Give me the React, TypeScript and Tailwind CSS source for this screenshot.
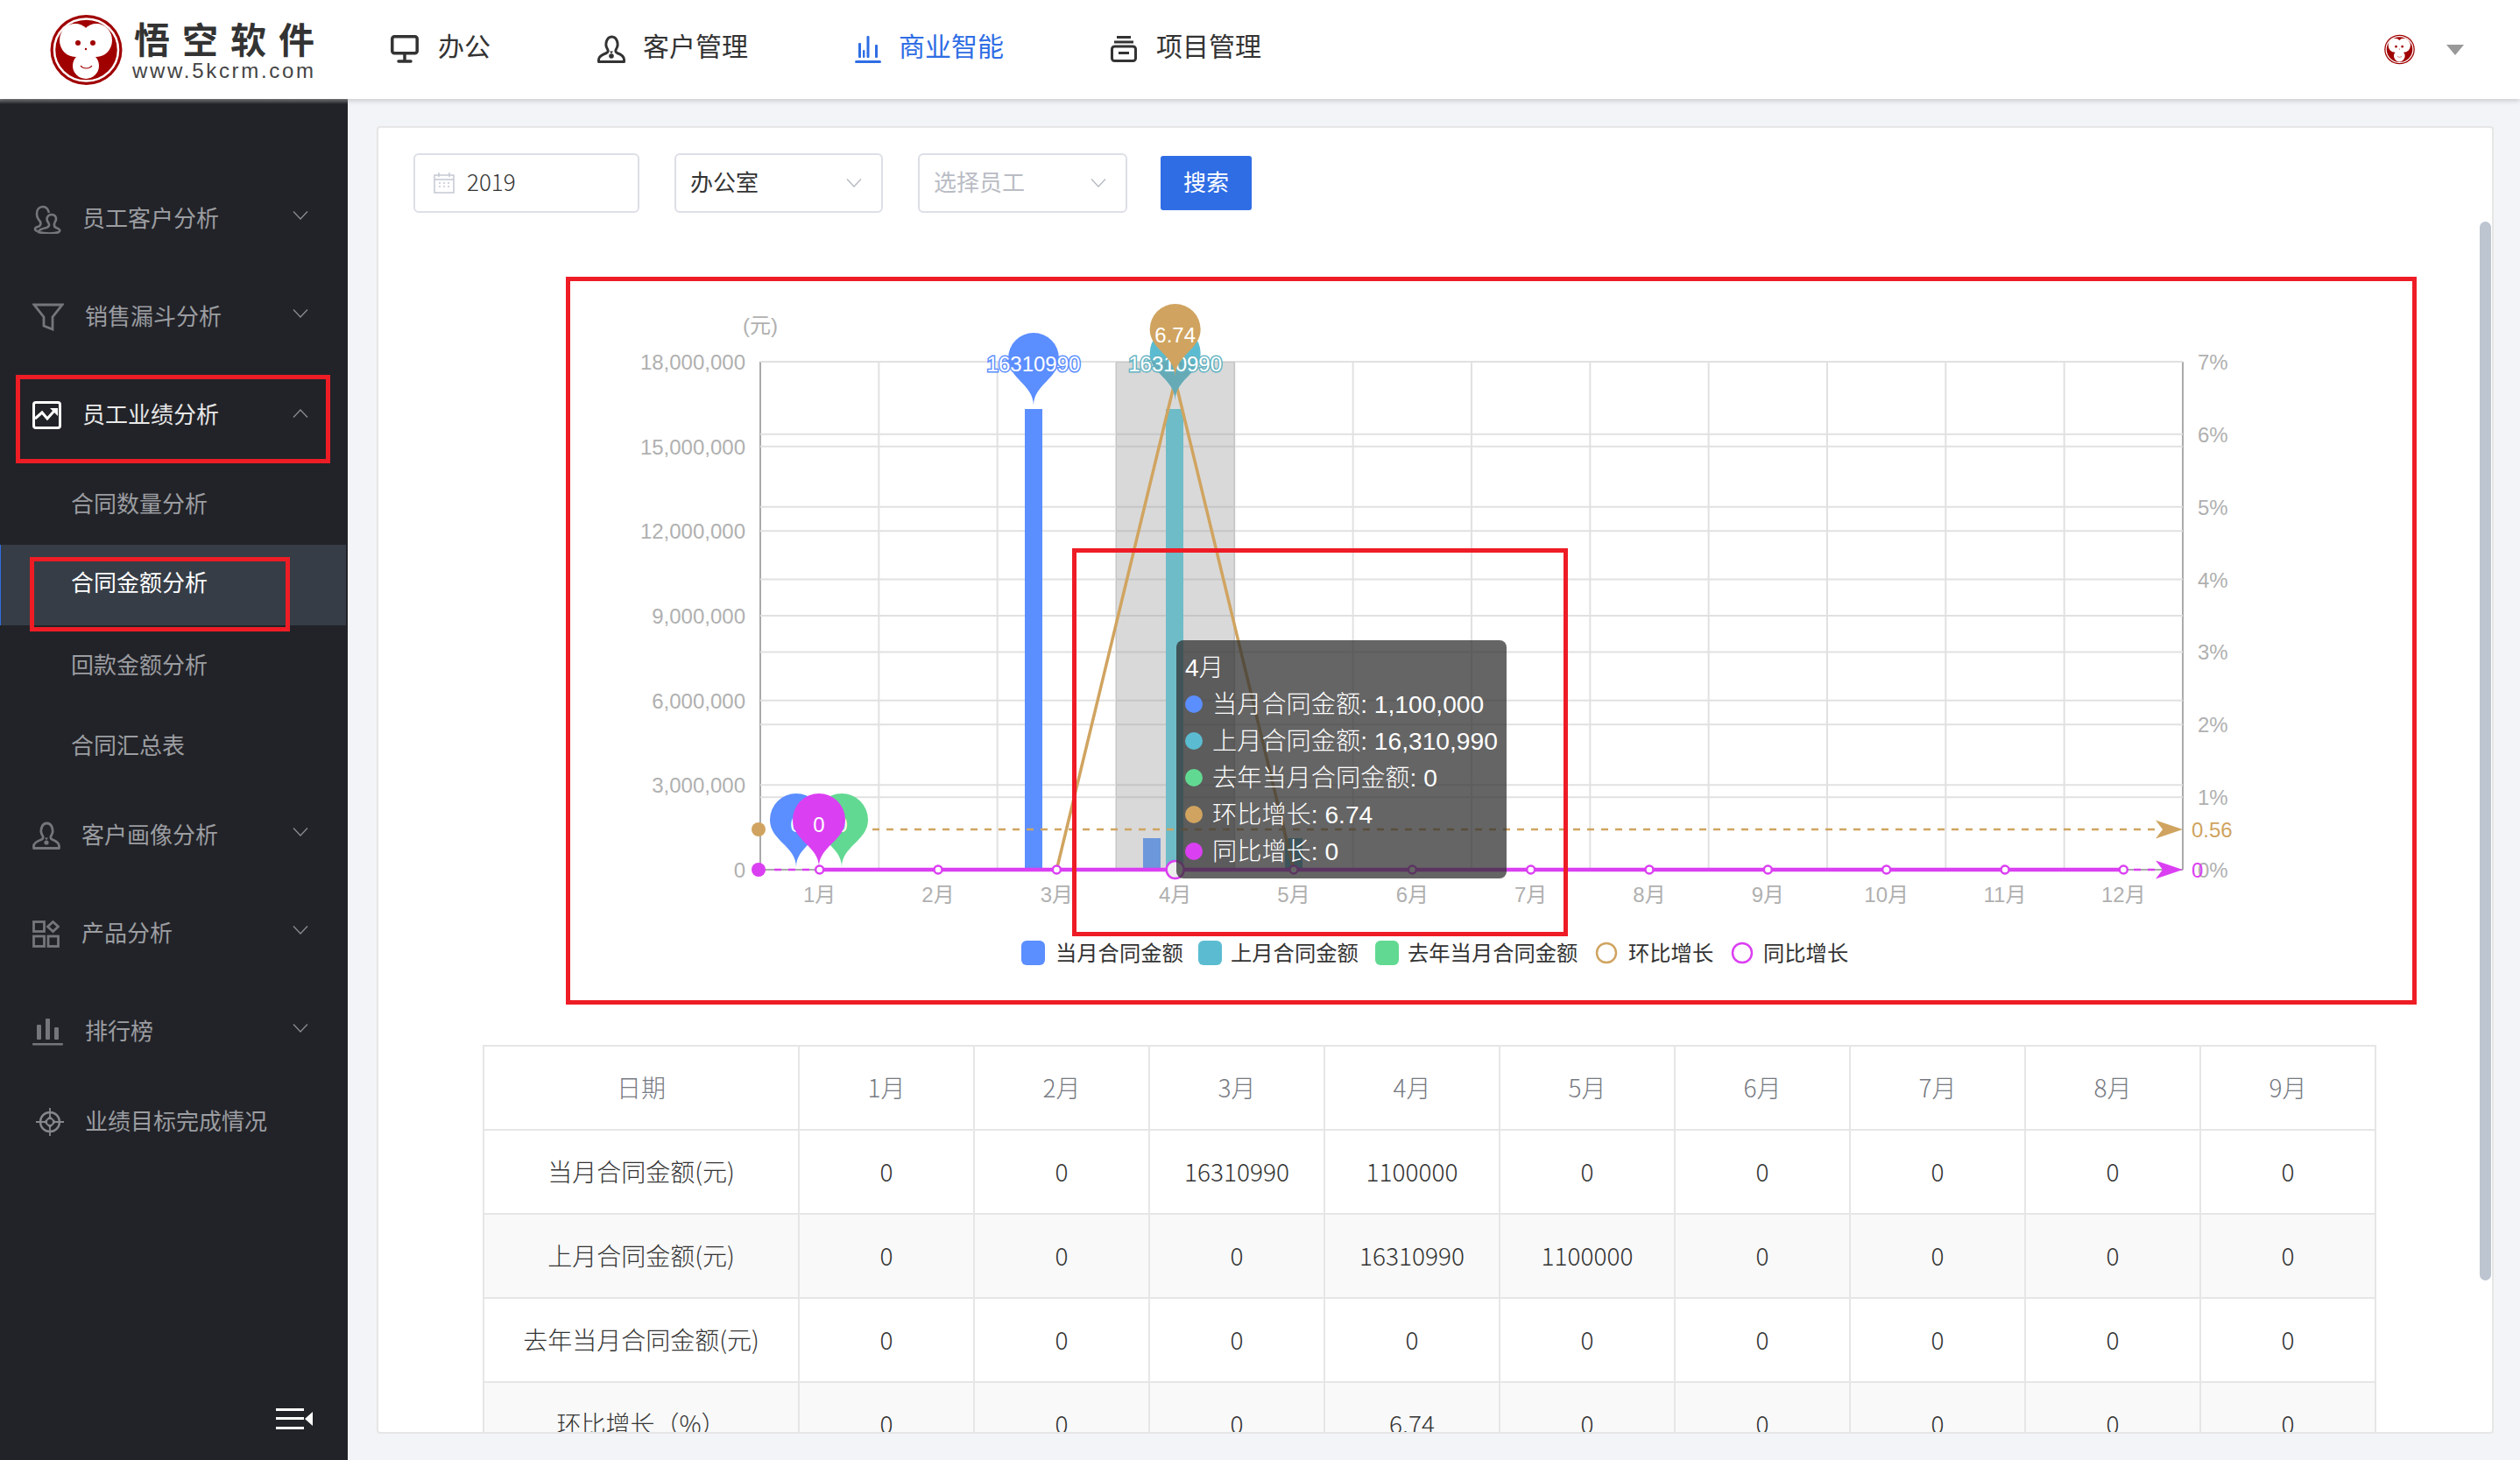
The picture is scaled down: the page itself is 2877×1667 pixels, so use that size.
import React from "react";

const RED = "border-[5px] border-[#ee1c25]";
const BLUE = "#5b8eff", TEAL = "#5bbcd1", GREEN = "#62d992", GOLD = "#d0a460", MAG = "#db3ff2";
const AXIS = "#aaaaaa", GRID = "#e1e1e1", LBL = "#b0b0b0";

const L = 868, R = 2492, T = 413, B = 993;
const CW = (R - L) / 12;
const cx = (i: number) => L + CW * (i + 0.5);
const money = ["0", "3,000,000", "6,000,000", "9,000,000", "12,000,000", "15,000,000", "18,000,000"];
const pct = ["0%", "1%", "2%", "3%", "4%", "5%", "6%", "7%"];

function pinPath(x: number, tip: number, r: number, h: number) {
  const cy = tip - h + r;
  return `M${x} ${tip}C${x} ${tip - 24} ${x - r} ${cy + r * 0.8} ${x - r} ${cy}A${r} ${r} 0 1 1 ${x + r} ${cy}C${x + r} ${cy + r * 0.8} ${x} ${tip - 24} ${x} ${tip}Z`;
}

function Arrow({ y, color }: { y: number; color: string }) {
  return <path d={`M${R} ${y}L${R - 31} ${y - 10.5}L${R - 23} ${y}L${R - 31} ${y + 10.5}Z`} fill={color} />;
}

function Chart() {
  const txt = { fontFamily: '"Liberation Sans","Noto Sans CJK SC",sans-serif', fontSize: 24 } as const;
  const leg = { ...txt, fontSize: 24.3 } as const;
  return (
    <svg viewBox="651 321 2103 821" className="block w-full h-full">
      <defs>
        <clipPath id="band">
          <rect x={1274} y={T} width={136} height={B - T} />
        </clipPath>
      </defs>
      {Array.from({ length: 13 }, (_, i) => (
        <line key={i} x1={L + CW * i} x2={L + CW * i} y1={T} y2={B} stroke={i === 0 || i === 12 ? AXIS : GRID} strokeWidth={2} />
      ))}
      {money.map((m, i) => {
        const y = B - (i * (B - T)) / 6;
        return (
          <g key={m}>
            {i > 0 && <line x1={L} x2={R} y1={y} y2={y} stroke={GRID} strokeWidth={2} />}
            <text x={851} y={y + 9} textAnchor="end" fill={LBL} style={txt}>{m}</text>
          </g>
        );
      })}
      {pct.map((m, i) => {
        const y = B - (i * (B - T)) / 7;
        return (
          <g key={m}>
            {i > 0 && <line x1={L} x2={R} y1={y} y2={y} stroke={GRID} strokeWidth={2} />}
            <text x={2509} y={y + 9} fill={LBL} style={txt}>{m}</text>
          </g>
        );
      })}
      <text x={868} y={380} textAnchor="middle" fill={LBL} style={txt}>(元)</text>
      {Array.from({ length: 12 }, (_, i) => (
        <text key={i} x={cx(i)} y={1030} textAnchor="middle" fill={LBL} style={txt}>{i + 1}月</text>
      ))}
      <line x1={L} x2={R} y1={B} y2={B} stroke={AXIS} strokeWidth={2} />

      {/* hover band, then bars */}
      <rect x={1274} y={T} width={136} height={B - T} fill="rgba(150,150,150,0.36)" />
      <rect x={1170} y={467} width={20} height={526} fill={BLUE} />
      <rect x={1331} y={467} width={20} height={526} fill="#6dbcc8" />
      <rect x={1305} y={957} width={20} height={36} fill="#6c97db" />
      <rect x={1467} y={957} width={20} height={36} fill={TEAL} />

      {/* mark lines */}
      <line x1={884} x2={R - 24} y1={947} y2={947} stroke={GOLD} strokeWidth={2.5} strokeDasharray="8 8" />
      <line x1={884} x2={R - 24} y1={B} y2={B} stroke={MAG} strokeWidth={2.5} strokeDasharray="8 8" />
      <Arrow y={947} color={GOLD} />
      <Arrow y={B} color={MAG} />
      <ellipse cx={866} cy={947} rx={8} ry={8} fill={GOLD} />
      <ellipse cx={866} cy={B} rx={8} ry={8} fill={MAG} />
      <text x={2502} y={956} fill={GOLD} style={txt}>0.56</text>
      <text x={2502} y={1002} fill={MAG} style={txt}>0</text>

      {/* lines */}
      <polyline points={`${cx(2)},${B} ${cx(3)},434 ${cx(4)},${B}`} fill="none" stroke={GOLD} strokeWidth={3.5} />
      <line x1={cx(0)} x2={cx(11)} y1={B} y2={B} stroke={MAG} strokeWidth={4.5} />
      {Array.from({ length: 12 }, (_, i) =>
        i === 3 ? (
          <circle key={i} cx={cx(i)} cy={B} r={10} fill="#eeeeee" stroke={MAG} strokeWidth={2.5} />
        ) : (
          <circle key={i} cx={cx(i)} cy={B} r={4.5} fill="#ffffff" stroke={MAG} strokeWidth={2.5} />
        )
      )}

      {/* pins */}
      <path d={pinPath(909, 990, 30, 84)} fill={BLUE} />
      <text x={909} y={950} textAnchor="middle" fill="#fff" style={txt}>0</text>
      <path d={pinPath(961, 990, 30, 84)} fill={GREEN} />
      <text x={961} y={950} textAnchor="middle" fill="#fff" style={txt}>0</text>
      <path d={pinPath(935, 990, 30, 84)} fill={MAG} />
      <text x={935} y={950} textAnchor="middle" fill="#fff" style={txt}>0</text>

      <path d={pinPath(1180, 463, 29, 83)} fill={BLUE} />
      <text x={1180} y={424} textAnchor="middle" fill="#fff" stroke={BLUE} strokeWidth={3} style={txt} paintOrder="stroke">16310990</text>
      <path d={pinPath(cx(3), 457, 29, 83)} fill={TEAL} />
      <path d={pinPath(cx(3), 457, 29, 83)} fill="#66aab5" clipPath="url(#band)" />
      <text x={cx(3)} y={424} textAnchor="middle" fill="#fff" stroke="#63b3c2" strokeWidth={3} style={txt} paintOrder="stroke">16310990</text>
      <path d={pinPath(cx(3), 430, 29, 83)} fill={GOLD} />
      <text x={cx(3)} y={391} textAnchor="middle" fill="#fff" style={txt}>6.74</text>

      {/* legend */}
      {[
        [1166, BLUE, 1205, "当月合同金额"],
        [1368, TEAL, 1405, "上月合同金额"],
        [1570, GREEN, 1607, "去年当月合同金额"],
      ].map(([x, c, tx, t]) => (
        <g key={t as string}>
          <rect x={x as number} y={1074} width={27} height={28} rx={6} fill={c as string} />
          <text x={tx as number} y={1097} fill="#333" style={leg}>{t as string}</text>
        </g>
      ))}
      <circle cx={1834} cy={1088} r={11} fill="#fff" stroke={GOLD} strokeWidth={2.5} />
      <text x={1859} y={1097} fill="#333" style={leg}>环比增长</text>
      <circle cx={1989} cy={1088} r={11} fill="#fff" stroke={MAG} strokeWidth={2.5} />
      <text x={2013} y={1097} fill="#333" style={leg}>同比增长</text>
    </svg>
  );
}

function Tooltip() {
  const rows = [
    [BLUE, "当月合同金额: 1,100,000"],
    [TEAL, "上月合同金额: 16,310,990"],
    [GREEN, "去年当月合同金额: 0"],
    [GOLD, "环比增长: 6.74"],
    [MAG, "同比增长: 0"],
  ];
  return (
    <div className="absolute left-[692px] top-[410px] w-[377px] h-[272px] rounded-lg bg-[rgba(50,50,50,0.75)] py-[10px] pl-[10px] text-[28.2px] font-light leading-[42px] text-white whitespace-nowrap">
      <div>4月</div>
      {rows.map(([c, t]) => (
        <div key={t} className="flex items-center gap-[11px]">
          <span className="w-[20px] h-[20px] rounded-full" style={{ background: c }} />
          <span>{t}</span>
        </div>
      ))}
    </div>
  );
}

function Chev({ up, className = "" }: { up?: boolean; className?: string }) {
  return (
    <svg width="18" height="10" viewBox="0 0 18 10" className={className} fill="none" stroke="currentColor" strokeWidth="1.3">
      <path d={up ? "M1 9.5L9 1L17 9.5" : "M1 .5L9 9L17 .5"} />
    </svg>
  );
}

const Icons: Record<string, React.ReactNode> = {
  users: (
    <svg width="33" height="33" viewBox="0 0 33 33" fill="none" stroke="#74767b" strokeWidth="2.6">
      <path d="M6 30c-4-1-4-4 0-5 3-1 4-3 3-6-3-3-4-6-4-9 0-5 3-8 7-8s6 3 7 7" />
      <path d="M7 31c7 2 18 2 23 0 3-2 0-4-3-5-2-1-3-3-1-7 2-3 1-8-4-8s-7 5-4 9c2 3 1 5-2 6-5 1-9 3-9 5z" />
    </svg>
  ),
  funnel: (
    <svg width="36" height="32" viewBox="0 0 36 32" fill="none" stroke="#74767b" strokeWidth="2.8">
      <path d="M2 2H34L23 16V30L13 26V16Z" strokeLinejoin="miter" />
    </svg>
  ),
  trend: (
    <svg width="33" height="32" viewBox="0 0 33 32" fill="none">
      <rect x="1.5" y="1.5" width="30" height="29" rx="2.5" stroke="#fff" strokeWidth="3" />
      <path d="M3 20L11 13L17 20L25 11" stroke="#fff" strokeWidth="3" />
      <path d="M20 8H29V17Z" fill="#fff" />
    </svg>
  ),
  person: (
    <svg width="32" height="32" viewBox="0 0 32 32" fill="none" stroke="#74767b" strokeWidth="2.8">
      <path d="M1.5 30.5h29V28c0-4-4-6-8-7.5-2-1-2-3-1-4.500 2-3 2-6 1-9-1-3-3-5-6-5s-5 2-6 5c-1 3-1 6 1 9 1 1.500 1 3.500-1 4.500-4 1.500-9 3.500-9 7.500z" strokeLinejoin="round" />
      <circle cx="16" cy="24" r="2.6" fill="#74767b" stroke="none" />
      <path d="M14 18.5l2 3 2-3" fill="#74767b" stroke="none" />
    </svg>
  ),
  grid: (
    <svg width="31" height="31" viewBox="0 0 31 31" fill="none" stroke="#74767b" strokeWidth="2.8">
      <rect x="1.5" y="1.5" width="12" height="11" />
      <rect x="1.5" y="18" width="12" height="11.5" />
      <rect x="18" y="18" width="11.5" height="11.5" />
      <path d="M23.5 1.5L29.5 7L23.5 12.5L17.5 7Z" />
    </svg>
  ),
  rank: (
    <svg width="35" height="32" viewBox="0 0 35 32" fill="#74767b">
      <rect x="5" y="8" width="5" height="17" rx="1" />
      <rect x="15" y="1" width="5" height="24" rx="1" />
      <rect x="25" y="11" width="5" height="14" rx="1" />
      <rect x="0" y="29" width="35" height="2.6" rx="1" />
    </svg>
  ),
  target: (
    <svg width="32" height="32" viewBox="0 0 32 32" fill="none" stroke="#85878b" strokeWidth="2.4">
      <path d="M0 16H32M16 0V32" strokeWidth="1.8" />
      <ellipse cx="16" cy="16" rx="11" ry="11" />
      <path d="M16 9L23 16L16 23L9 16Z" fill="#85878b" stroke="none" />
      <circle cx="16" cy="16" r="3" fill="#222328" stroke="none" />
    </svg>
  ),
};

function SideRow({ icon, label, gap, active, up }: { icon: string; label: string; gap: string; active?: boolean; up?: boolean }) {
  return (
    <div className="flex items-center h-[112px] pl-[37px] pr-[45px]">
      <span className={`flex ${gap} items-center`}>{Icons[icon]}</span>
      <span className={`flex-1 text-[26px] ${active ? "text-[#e8e8e8]" : "text-[#9b9da1]"}`}>{label}</span>
      <Chev up={up} className={`text-[#8a8c90] ${up ? "-translate-y-[2px]" : "-translate-y-[4px]"}`} />
    </div>
  );
}

function SubRow({ label, active }: { label: string; active?: boolean }) {
  return (
    <div className={`h-[92px] flex items-center text-[26px] ${active ? "bg-[#363d46] text-white border-l border-[#2f6de4] pl-[80px] mr-[2px] pb-[4px]" : "pl-[81px] text-[#9b9da1]"}`}>
      {label}
    </div>
  );
}

function Sidebar() {
  return (
    <aside className="relative w-[397px] shrink-0 bg-[#222328] pt-[81px]">
      <div className="absolute left-0 right-0 top-0 h-[6px] bg-gradient-to-b from-[#7f8083] to-[#222328]" />
      <SideRow icon="users" label="员工客户分析" gap="w-[57px]" />
      <SideRow icon="funnel" label="销售漏斗分析" gap="w-[60px]" />
      <SideRow icon="trend" label="员工业绩分析" gap="w-[57px]" active up />
      <SubRow label="合同数量分析" />
      <SubRow label="合同金额分析" active />
      <SubRow label="回款金额分析" />
      <SubRow label="合同汇总表" />
      <SideRow icon="person" label="客户画像分析" gap="w-[56px]" />
      <SideRow icon="grid" label="产品分析" gap="w-[56px]" />
      <SideRow icon="rank" label="排行榜" gap="w-[60px]" />
      <div className="flex items-center h-[94px] pl-[41px]">
        <span className="flex w-[56px] items-center">{Icons.target}</span>
        <span className="text-[26px] text-[#9b9da1]">业绩目标完成情况</span>
      </div>
      <svg width="42" height="24" viewBox="0 0 42 24" className="absolute left-[315px] top-[1495px]" fill="#fff">
        <rect x="0" y="0" width="32" height="3" />
        <rect x="0" y="10" width="32" height="3" />
        <rect x="0" y="21" width="32" height="3" />
        <path d="M33 12L42 4V20Z" />
      </svg>
      {/* annotation boxes */}
      <div className={`absolute left-[18px] top-[315px] w-[359px] h-[101px] ${RED}`} />
      <div className={`absolute left-[34px] top-[523px] w-[297px] h-[85px] ${RED}`} />
    </aside>
  );
}

function Field({ w, text, placeholder, cal }: { w: string; text: string; placeholder?: boolean; cal?: boolean }) {
  return (
    <div className={`${w} h-[68px] flex items-center justify-between border-2 border-[#dcdfe6] rounded-[6px] text-[26px] ${cal ? "pl-[21px]" : "pl-[16px] pr-[22px]"} ${placeholder ? "text-[#b9bcc4]" : "text-[#333]"}`}>
      {cal ? (
        <span className="flex items-center gap-[14px]">
          <svg width="24" height="24" viewBox="0 0 24 24" fill="none" stroke="#c4c8d2" strokeWidth="1.5">
            <rect x="1" y="3" width="22" height="20" />
            <path d="M1 8H23M6 0V5M18 0V5M6 12H8M11 12H13M16 12H18M6 16H8M11 16H13M16 16H18" />
          </svg>
          <span className="font-['Noto_Sans_CJK_SC'] font-light -translate-y-[3px]">{text}</span>
        </span>
      ) : (
        <>
          <span>{text}</span>
          <Chev className="text-[#b4b8c0]" />
        </>
      )}
    </div>
  );
}

const MONTHS = ["1月", "2月", "3月", "4月", "5月", "6月", "7月", "8月", "9月"];
const TABLE: [string, (string | number)[]][] = [
  ["当月合同金额(元)", [0, 0, 16310990, 1100000, 0, 0, 0, 0, 0]],
  ["上月合同金额(元)", [0, 0, 0, 16310990, 1100000, 0, 0, 0, 0]],
  ["去年当月合同金额(元)", [0, 0, 0, 0, 0, 0, 0, 0, 0]],
  ["环比增长（%）", [0, 0, 0, "6.74", 0, 0, 0, 0, 0]],
];

function DataTable() {
  return (
    <table className="table-fixed w-[2160px] border-collapse text-[28px] font-light text-[#333] font-['Noto_Sans_CJK_SC','Liberation_Sans',sans-serif]">
      <colgroup>
        <col className="w-[360px]" />
        {MONTHS.map((m) => <col key={m} className="w-[200px]" />)}
      </colgroup>
      <thead>
        <tr className="h-[96px] text-[#777a82]">
          <th className="font-light pb-[2px] border-2 border-[#e6e6e6]">日期</th>
          {MONTHS.map((m) => <th key={m} className="font-light pb-[2px] border-2 border-[#e6e6e6]">{m}</th>)}
        </tr>
      </thead>
      <tbody>
        {TABLE.map(([name, vals], r) => (
          <tr key={name} className={`h-[96px] ${r % 2 ? "bg-[#f9f9f9]" : "bg-white"}`}>
            <td className="text-center pb-[2px] border-2 border-[#e6e6e6]">{name}</td>
            {vals.map((v, i) => <td key={i} className="text-center pb-[2px] border-2 border-[#e6e6e6]">{v}</td>)}
          </tr>
        ))}
      </tbody>
    </table>
  );
}

function MonkeyFace() {
  return (
    <>
      <ellipse cx="29" cy="29" rx="18" ry="19" fill="#fff" />
      <ellipse cx="53" cy="29" rx="18" ry="19" fill="#fff" />
      <ellipse cx="41" cy="38" rx="16" ry="13" fill="#fff" />
      <ellipse cx="41" cy="58" rx="15" ry="15" fill="#fff" />
      <circle cx="32" cy="32" r="3" fill="#a00000" />
      <circle cx="49" cy="32" r="3" fill="#a00000" />
      <circle cx="41" cy="39" r="1.2" fill="#a00000" />
      <path d="M35 58c3 4 10 4 13 0" fill="none" stroke="#a00000" strokeWidth="1.2" />
    </>
  );
}

function Logo() {
  return (
    <div className="flex items-center gap-[13px] w-[300px]">
      <svg width="83" height="80" viewBox="0 0 83 80" className="shrink-0">
        <ellipse cx="41.5" cy="40" rx="41" ry="40" fill="#a00000" />
        <ellipse cx="41.5" cy="40" rx="36.5" ry="35.5" fill="none" stroke="#fff" strokeWidth="2.5" />
        <MonkeyFace />
      </svg>
      <div className="flex flex-col pt-[5px]">
        <span className="text-[41px] leading-[40px] font-bold tracking-[14px] text-[#333] whitespace-nowrap">悟空软件</span>
        <span className="-ml-[2px] text-[24px] leading-[20px] mt-[4px] tracking-[2.7px] text-[#444] whitespace-nowrap font-['Liberation_Sans']">www.5kcrm.com</span>
      </div>
    </div>
  );
}

function NavItem({ icon, label, gap, first, active }: { icon: React.ReactNode; label: string; gap: string; first?: boolean; active?: boolean }) {
  return (
    <div className={`flex items-center ${gap} ${first ? "" : "ml-[122px]"} text-[30px] ${active ? "text-[#2f6de4]" : "text-[#333]"}`}>
      {icon}
      <span className="-translate-y-[3px]">{label}</span>
    </div>
  );
}

function Header() {
  return (
    <header className="relative z-10 h-[113px] shrink-0 bg-white shadow-[0_2px_6px_rgba(0,0,0,0.18)] flex items-center pl-[57px] pr-[64px]">
      <Logo />
      <nav className="flex items-center ml-[89px]">
        <NavItem first gap="gap-[22px]" label="办公" icon={
          <svg width="32" height="32" viewBox="0 0 32 32" fill="none" stroke="#333" strokeWidth="3.5" className="-translate-y-[1px]">
            <rect x="1.8" y="1.8" width="28.4" height="19" rx="2.5" />
            <path d="M16 21V29" />
            <path d="M9 30H23" strokeLinecap="round" />
          </svg>
        } />
        <NavItem gap="gap-[20px]" label="客户管理" icon={
          <svg width="32" height="32" viewBox="0 0 32 32" fill="none" stroke="#333" strokeWidth="3" className="-translate-y-[1px]">
            <path d="M1.5 30.5h29V28c0-4-4-6-8-7.5-2-1-2-3-1-4.5 2-3 2-6 1-9-1-3-3-5-6-5s-5 2-6 5c-1 3-1 6 1 9 1 1.5 1 3.5-1 4.5-4 1.5-9 3.5-9 7.5z" strokeLinejoin="round" />
            <circle cx="16" cy="24" r="2.8" fill="#333" stroke="none" />
            <path d="M14 18.5l2 3 2-3" fill="#333" stroke="none" />
          </svg>
        } />
        <NavItem active gap="gap-[20px]" label="商业智能" icon={
          <svg width="30" height="32" viewBox="0 0 30 32" fill="#2f6de4" className="-translate-y-[1px]">
            <rect x="4" y="9" width="3" height="17" rx="1" />
            <rect x="13.5" y="1" width="3" height="25" rx="1" />
            <rect x="23" y="11" width="3" height="15" rx="1" />
            <rect x="9" y="17" width="2.4" height="9" rx="1" />
            <rect x="0" y="29" width="30" height="3" rx="1.5" />
          </svg>
        } />
        <NavItem gap="gap-[22px]" label="项目管理" icon={
          <svg width="30" height="30" viewBox="0 0 30 30" fill="none" stroke="#333" strokeWidth="3" className="-translate-y-[1px]">
            <path d="M7 1.5H23" />
            <path d="M4 7H26" />
            <rect x="1.5" y="12" width="27" height="16.5" rx="3" />
            <path d="M9 19.5H21" />
          </svg>
        } />
      </nav>
      <div className="ml-auto flex items-center gap-[36px]">
        <svg width="35" height="35" viewBox="0 0 83 80">
          <ellipse cx="41.5" cy="40" rx="41" ry="40" fill="#a00000" />
          <ellipse cx="41.5" cy="40" rx="36.5" ry="35.5" fill="none" stroke="#fff" strokeWidth="3" />
          <MonkeyFace />
        </svg>
        <svg width="20" height="12" viewBox="0 0 20 12"><path d="M0 0H20L10 12Z" fill="#999" /></svg>
      </div>
    </header>
  );
}

export default function App() {
  return (
    <div className="w-[2877px] h-[1667px] overflow-hidden flex flex-col bg-[#f3f4f8] font-['Liberation_Sans','Noto_Sans_CJK_SC',sans-serif]">
      <Header />
      <div className="flex flex-1 min-h-0">
        <Sidebar />
        <main className="flex-1 min-w-0 pt-[31px] pb-[30px] pl-[33px] pr-[30px]">
          <div className="relative h-full bg-white border-2 border-[#e6e6e6] rounded-[4px] overflow-hidden pt-[29px] pl-[40px]">
            <div className="flex gap-[40px] items-center">
              <Field w="w-[258px]" text="2019" cal />
              <Field w="w-[238px]" text="办公室" />
              <Field w="w-[239px]" text="选择员工" placeholder />
              <button className="w-[104px] h-[62px] bg-[#2f6de4] rounded-[3px] text-white text-[26px] -ml-[2px]">搜索</button>
            </div>
            <div className={`relative w-[2113px] h-[831px] mt-[73px] ml-[174px] ${RED}`}>
              <Chart />
              <Tooltip />
              <div className={`absolute left-[573px] top-[305px] w-[566px] h-[443px] ${RED}`} />
            </div>
            <div className="mt-[46px] ml-[79px]">
              <DataTable />
            </div>
            <div className="absolute left-[2399px] top-[107px] w-[13px] h-[1209px] bg-[#bcc5d0] rounded-full" />
          </div>
        </main>
      </div>
    </div>
  );
}
